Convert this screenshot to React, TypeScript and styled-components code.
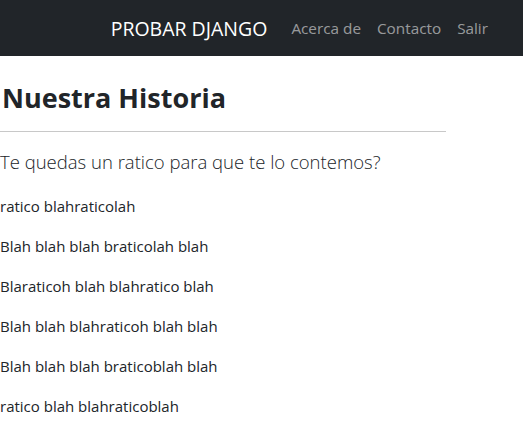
import React from "react";
import styled, { createGlobalStyle } from "styled-components";

const Global = createGlobalStyle`
  html, body { margin: 0; padding: 0; background: #fff; }
  body { font-family: "Open Sans", "Noto Sans", sans-serif; color: #212529; }
`;

const Navbar = styled.nav`
  height: 56px;
  background: #212529;
  display: flex;
  align-items: center;
  justify-content: flex-end;
  padding-right: 27px;
`;

const Brand = styled.a`
  color: #fff;
  font-size: 19.5px;
  margin-right: 16px;
  text-decoration: none;
`;

const NavLink = styled.a`
  color: rgba(255, 255, 255, 0.55);
  font-size: 15.3px;
  padding: 0 8px;
  text-decoration: none;
`;

const Main = styled.main`
  padding-top: 24px;
`;

const Title = styled.h1`
  margin: 0 0 0 2px;
  font-size: 27px;
  font-weight: 700;
  line-height: 36px;
`;

const Rule = styled.hr`
  width: 446px;
  margin: 15px 0 15px 0;
  border: 0;
  border-top: 1px solid #c8c8c8;
`;

const Lead = styled.p`
  font-size: 18.5px;
  font-weight: 300;
  line-height: 30px;
  margin: 0 0 17px;
`;

const Para = styled.p`
  font-size: 15px;
  line-height: 24px;
  margin: 0 0 16px;
`;

const lines = [
  "ratico blahraticolah",
  "Blah blah blah braticolah blah",
  "Blaraticoh blah blahratico blah",
  "Blah blah blahraticoh blah blah",
  "Blah blah blah braticoblah blah",
  "ratico blah blahraticoblah",
];

export default function App() {
  return (
    <>
      <Global />
      <Navbar>
        <Brand href="#">PROBAR DJANGO</Brand>
        <NavLink href="#">Acerca de</NavLink>
        <NavLink href="#">Contacto</NavLink>
        <NavLink href="#">Salir</NavLink>
      </Navbar>
      <Main>
        <Title>Nuestra Historia</Title>
        <Rule />
        <Lead>Te quedas un ratico para que te lo contemos?</Lead>
        {lines.map((l) => (
          <Para key={l}>{l}</Para>
        ))}
      </Main>
    </>
  );
}
